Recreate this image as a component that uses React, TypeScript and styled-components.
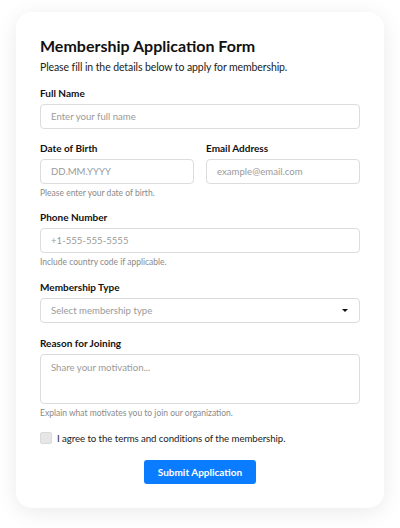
import React from "react";
import styled, { createGlobalStyle } from "styled-components";

const FONT = `Lato, "Noto Sans", sans-serif`;

const Global = createGlobalStyle`
  html, body { margin: 0; padding: 0; background: #ffffff; }
  body { font-family: ${FONT}; color: #111; }
  * { box-sizing: border-box; }
`;

const Page = styled.div`
  padding: 12px 16px 20px;
`;

const Card = styled.form`
  background: #fff;
  border-radius: 16px;
  box-shadow: 0 4px 22px rgba(0, 0, 0, 0.085);
  padding: 24px;
  display: flex;
  flex-direction: column;
`;

const Title = styled.h1`
  margin: 0;
  font-size: 16px;
  line-height: 20px;
  font-weight: 700;
  color: #111;
`;

const Subtitle = styled.p`
  margin: 4px 0 0;
  font-size: 10.5px;
  letter-spacing: -0.1px;
  line-height: 14px;
  color: #222;
`;

const Field = styled.div<{ $mt?: number }>`
  display: flex;
  flex-direction: column;
  margin-top: ${(p) => p.$mt ?? 13}px;
  min-width: 0;
`;

const Row = styled.div`
  display: grid;
  grid-template-columns: 1fr 1fr;
  gap: 12px;
  margin-top: 13px;
`;

const Label = styled.label`
  font-size: 10px;
  line-height: 12px;
  font-weight: 700;
  color: #111;
  margin-bottom: 5px;
`;

const inputBase = `
  width: 100%;
  border: 1px solid #dcdcdc;
  border-radius: 4px;
  background: #fff;
  font-family: ${FONT};
  font-size: 9.6px;
  color: #222;
  padding: 0 10px;
  outline: none;
  &::placeholder { color: #9a9a9a; }
`;

const Input = styled.input`
  ${inputBase}
  height: 25px;
`;

const TextArea = styled.textarea`
  ${inputBase}
  height: 50px;
  padding: 7px 10px;
  resize: none;
  display: block;
`;

const SelectBox = styled.div`
  ${inputBase}
  height: 25px;
  display: flex;
  align-items: center;
  justify-content: space-between;
  color: #9a9a9a;
  padding-right: 11px;
`;

const Caret = styled.span`
  width: 0;
  height: 0;
  border-left: 3px solid transparent;
  border-right: 3px solid transparent;
  border-top: 3.5px solid #111;
`;

const Hint = styled.div`
  font-size: 8.5px;
  line-height: 10px;
  color: #8a8a8a;
  margin-top: 4px;
`;

const CheckRow = styled.label`
  display: flex;
  align-items: center;
  gap: 5px;
  margin-top: 14px;
  font-size: 9.7px;
  letter-spacing: -0.08px;
  line-height: 12px;
  color: #222;
`;

const Box = styled.span`
  width: 12px;
  height: 12px;
  border-radius: 2px;
  background: #e6e6e6;
  border: 1px solid #dadada;
  flex: none;
`;

const ButtonRow = styled.div`
  display: flex;
  justify-content: center;
  margin-top: 16px;
`;

const Button = styled.button`
  width: 112px;
  height: 24px;
  border: none;
  border-radius: 3px;
  background: #0a7cff;
  color: #fff;
  font-family: ${FONT};
  font-size: 10px;
  font-weight: 700;
  padding: 0;
`;

export default function App() {
  return (
    <>
      <Global />
      <Page>
        <Card onSubmit={(e) => e.preventDefault()}>
          <Title>Membership Application Form</Title>
          <Subtitle>Please fill in the details below to apply for membership.</Subtitle>

          <Field>
            <Label>Full Name</Label>
            <Input placeholder="Enter your full name" />
          </Field>

          <Row>
            <Field $mt={0}>
              <Label>Date of Birth</Label>
              <Input placeholder="DD.MM.YYYY" />
              <Hint>Please enter your date of birth.</Hint>
            </Field>
            <Field $mt={0}>
              <Label>Email Address</Label>
              <Input placeholder="example@email.com" />
            </Field>
          </Row>

          <Field>
            <Label>Phone Number</Label>
            <Input placeholder="+1-555-555-5555" />
            <Hint>Include country code if applicable.</Hint>
          </Field>

          <Field $mt={14}>
            <Label>Membership Type</Label>
            <SelectBox>
              <span>Select membership type</span>
              <Caret />
            </SelectBox>
          </Field>

          <Field $mt={14}>
            <Label>Reason for Joining</Label>
            <TextArea placeholder="Share your motivation..." />
            <Hint>Explain what motivates you to join our organization.</Hint>
          </Field>

          <CheckRow>
            <Box />
            I agree to the terms and conditions of the membership.
          </CheckRow>

          <ButtonRow>
            <Button type="submit">Submit Application</Button>
          </ButtonRow>
        </Card>
      </Page>
    </>
  );
}
